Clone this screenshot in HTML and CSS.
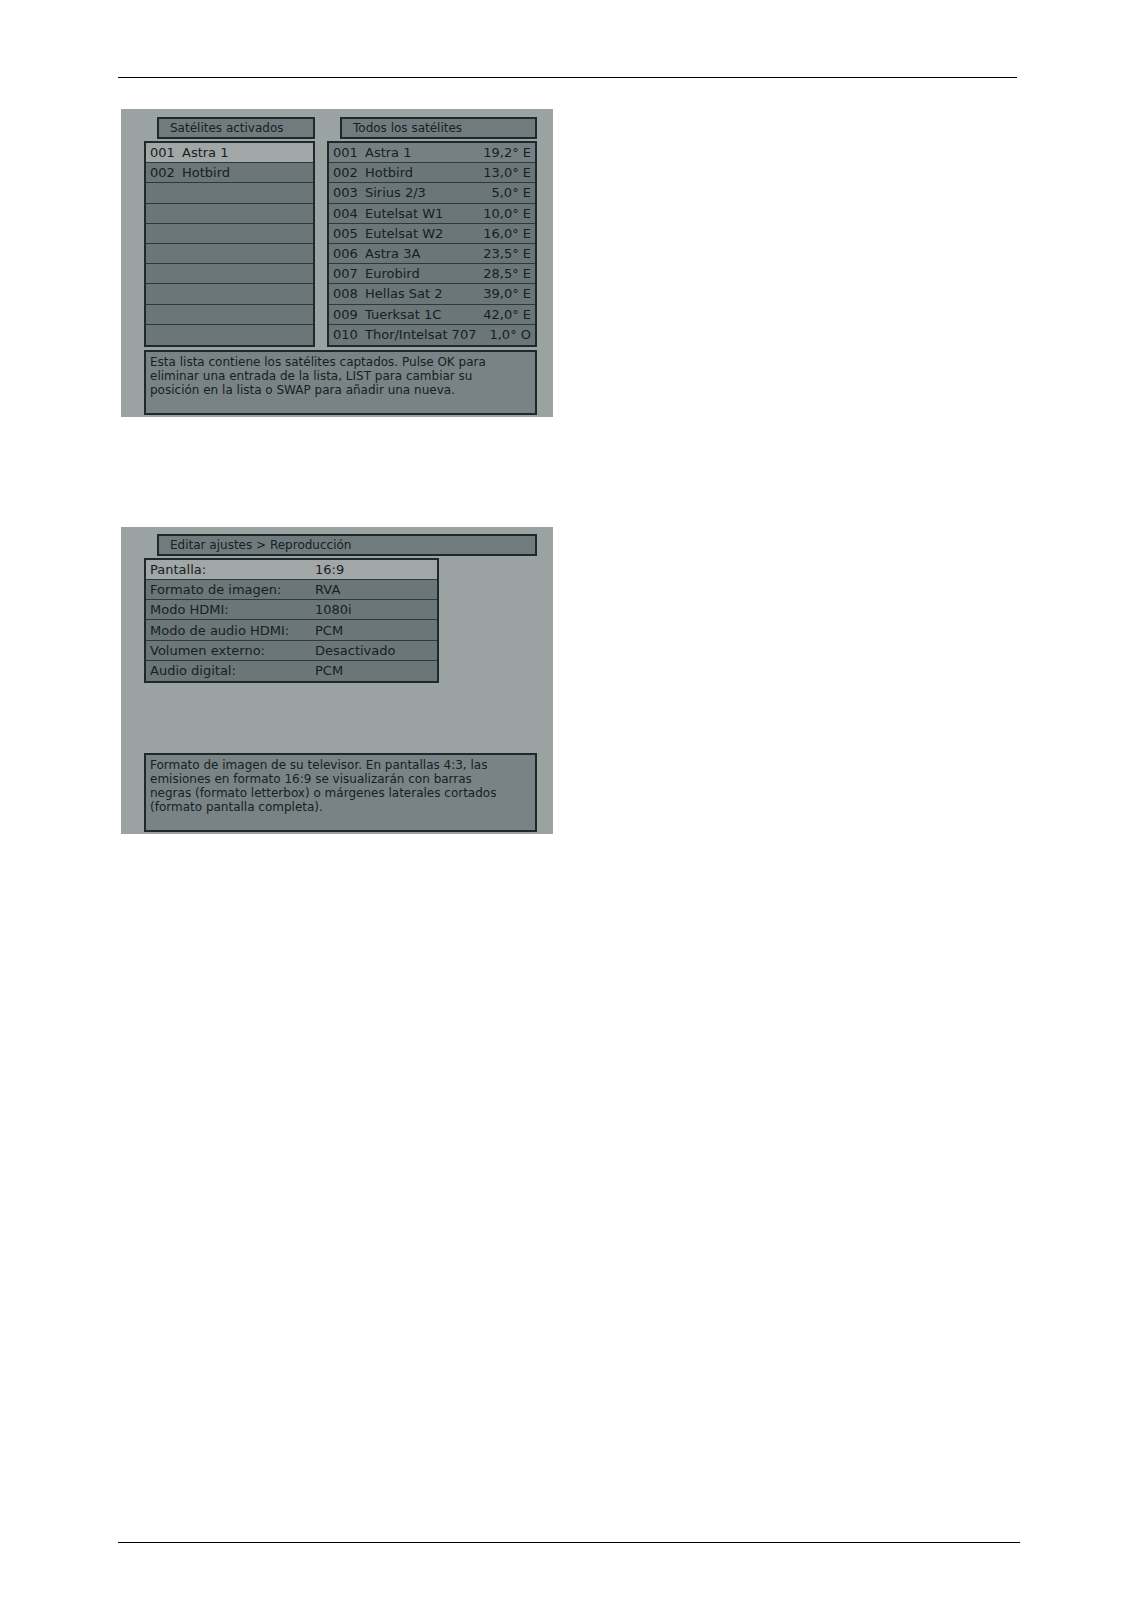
FILE: index.html
```html
<!DOCTYPE html>
<html lang="es">
<head>
  <meta charset="UTF-8" />
  <meta name="viewport" content="width=device-width, initial-scale=1" />
  <title>Ajustes del receptor</title>
  <link rel="stylesheet" href="styles.css">
</head>
<body>
  <header class="page-header"></header>

  <main>
    <section class="screen screen-satellites">
      <div class="lists">
        <div class="list">
          <h2 class="title">Satélites activados</h2>
          <table class="menu">
            <tbody>
              <tr class="selected"><td class="num">001</td><td>Astra 1</td></tr>
              <tr><td class="num">002</td><td>Hotbird</td></tr>
              <tr><td class="num"></td><td></td></tr>
              <tr><td class="num"></td><td></td></tr>
              <tr><td class="num"></td><td></td></tr>
              <tr><td class="num"></td><td></td></tr>
              <tr><td class="num"></td><td></td></tr>
              <tr><td class="num"></td><td></td></tr>
              <tr><td class="num"></td><td></td></tr>
              <tr><td class="num"></td><td></td></tr>
            </tbody>
          </table>
        </div>

        <div class="list">
          <h2 class="title">Todos los satélites</h2>
          <table class="menu">
            <tbody>
              <tr class="current"><td class="num">001</td><td>Astra 1</td><td class="pos">19,2° E</td></tr>
              <tr><td class="num">002</td><td>Hotbird</td><td class="pos">13,0° E</td></tr>
              <tr><td class="num">003</td><td>Sirius 2/3</td><td class="pos">5,0° E</td></tr>
              <tr><td class="num">004</td><td>Eutelsat W1</td><td class="pos">10,0° E</td></tr>
              <tr><td class="num">005</td><td>Eutelsat W2</td><td class="pos">16,0° E</td></tr>
              <tr><td class="num">006</td><td>Astra 3A</td><td class="pos">23,5° E</td></tr>
              <tr><td class="num">007</td><td>Eurobird</td><td class="pos">28,5° E</td></tr>
              <tr><td class="num">008</td><td>Hellas Sat 2</td><td class="pos">39,0° E</td></tr>
              <tr><td class="num">009</td><td>Tuerksat 1C</td><td class="pos">42,0° E</td></tr>
              <tr><td class="num">010</td><td>Thor/Intelsat 707</td><td class="pos">1,0° O</td></tr>
            </tbody>
          </table>
        </div>
      </div>

      <p class="info">Esta lista contiene los satélites captados. Pulse OK para<br>
        eliminar una entrada de la lista, LIST para cambiar su<br>
        posición en la lista o SWAP para añadir una nueva.</p>
    </section>

    <section class="screen screen-settings">
      <h2 class="title">Editar ajustes &gt; Reproducción</h2>
      <table class="menu">
        <tbody>
          <tr class="selected"><th scope="row">Pantalla:</th><td>16:9</td></tr>
          <tr><th scope="row">Formato de imagen:</th><td>RVA</td></tr>
          <tr><th scope="row">Modo HDMI:</th><td>1080i</td></tr>
          <tr><th scope="row">Modo de audio HDMI:</th><td>PCM</td></tr>
          <tr><th scope="row">Volumen externo:</th><td>Desactivado</td></tr>
          <tr><th scope="row">Audio digital:</th><td>PCM</td></tr>
        </tbody>
      </table>

      <p class="info">Formato de imagen de su televisor. En pantallas 4:3, las<br>
        emisiones en formato 16:9 se visualizarán con barras<br>
        negras (formato letterbox) o márgenes laterales cortados<br>
        (formato pantalla completa).</p>
    </section>
  </main>

  <footer class="page-footer"></footer>
</body>
</html>
```
FILE: styles.css
```css
:root {
  --screen-bg: #9ba2a2;
  --row-bg: #6b7678;
  --title-bg: #707b7e;
  --info-bg: #798386;
  --selected-bg: #a1a6a6;
  --frame: #1e292b;
  --row-line: #2d393b;
  --text: #172022;
}

* {
  box-sizing: border-box;
}

body {
  margin: 0;
  min-height: 100vh;
  display: flex;
  flex-direction: column;
  padding: 77px 103px 75px 118px;
  background: #fff;
  color: var(--text);
  font-family: "DejaVu Sans", Verdana, sans-serif;
  font-size: 12px;
  line-height: 14px;
}

.page-header {
  margin-right: 3px;
  border-top: 1px solid #000;
}

.page-footer {
  margin-top: auto;
  border-top: 1px solid #000;
}

main {
  padding: 31px 3px;
}

.screen {
  display: flex;
  flex-direction: column;
  max-width: 432px;
  padding: 8px 16px 2px 23px;
  background: var(--screen-bg);
}

.screen-settings {
  min-height: 307px;
  margin-top: 110px;
  padding-top: 7px;
}

.lists {
  display: grid;
  grid-template-columns: 171fr 210fr;
  gap: 12px;
}

.title {
  margin: 0 0 2px 13px;
  padding: 0 11px;
  border: 2px solid var(--frame);
  background: var(--title-bg);
  font-size: 12px;
  font-weight: normal;
  line-height: 18px;
}

.menu {
  width: 100%;
  height: 206px;
  border: 2px solid var(--frame);
  border-spacing: 0;
  background: var(--row-bg);
  font-size: 13px;
}

.menu th,
.menu td {
  height: 20px;
  padding: 1px 4px 0;
  border-bottom: 1px solid var(--row-line);
  text-align: left;
  font-weight: normal;
  white-space: nowrap;
}

.menu tr:last-child th,
.menu tr:last-child td {
  border-bottom: none;
}

.menu .num {
  width: 36px;
  padding-right: 0;
}

.menu td + td {
  padding-left: 0;
}

.menu .pos {
  text-align: right;
}

.menu .current {
  background: #768084;
}

.menu .selected {
  background: var(--selected-bg);
}

.screen-settings .menu {
  width: 75%;
  height: 125px;
}

.screen-settings .menu th {
  width: 165px;
}

.info {
  min-height: 65px;
  margin: 3px 0 0;
  padding: 3px 4px;
  border: 2px solid var(--frame);
  background: var(--info-bg);
}

.screen-settings .info {
  min-height: 79px;
  margin-top: auto;
}
```
